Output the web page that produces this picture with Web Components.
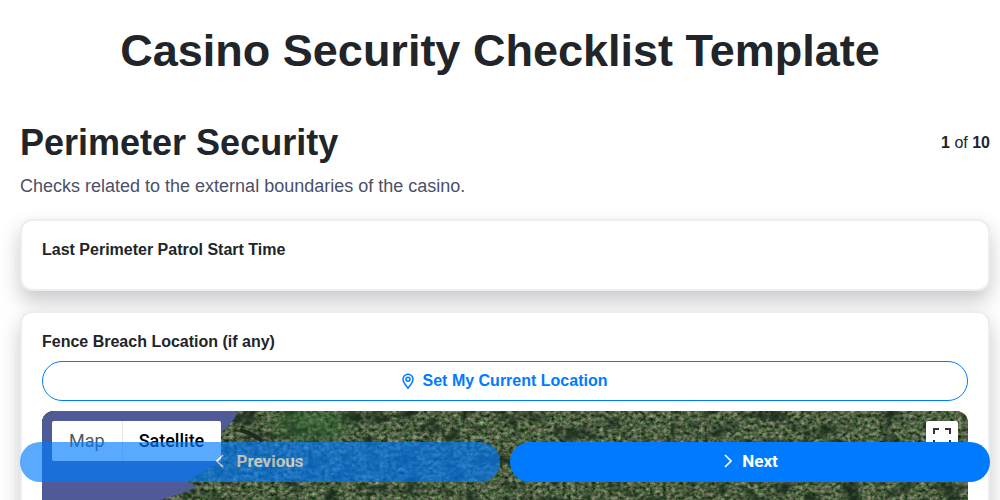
<!DOCTYPE html>
<html lang="en">
<head>
<meta charset="utf-8">
<title>Casino Security Checklist Template</title>
<style>
    html, body { margin: 0; height: 100%; overflow: hidden; background: #fff; }
    body { font-family: "Liberation Sans", Arial, sans-serif; color: #212529; }
</style>
</head>
<body>

<checklist-page>
    <span slot="title">Casino Security Checklist Template</span>
    <section-head heading="Perimeter Security" current="1" total="10">
        Checks related to the external boundaries of the casino.
    </section-head>
    <field-card label="Last Perimeter Patrol Start Time"></field-card>
    <field-card label="Fence Breach Location (if any)">
        <location-button>Set My Current Location</location-button>
        <satellite-map></satellite-map>
    </field-card>
</checklist-page>

<nav-footer></nav-footer>

<script>
class ChecklistPage extends HTMLElement {
    constructor() {
        super();
        this.attachShadow({ mode: 'open' });
    }

    connectedCallback() {
        this.shadowRoot.innerHTML = `
            <style>
                :host { display: block; padding: 0 10px 0 20px; }
                h1 {
                    margin: 0 10px 0 0;
                    padding: 24px 0 44px;
                    font-size: 45px;
                    line-height: 53px;
                    font-weight: 700;
                    text-align: center;
                }
                .body { display: flex; flex-direction: column; gap: 20px; }
            </style>
            <h1><slot name="title"></slot></h1>
            <div class="body"><slot></slot></div>
        `;
    }
}

class SectionHead extends HTMLElement {
    constructor() {
        super();
        this.attachShadow({ mode: 'open' });
    }

    connectedCallback() {
        const heading = this.getAttribute('heading');
        const current = this.getAttribute('current');
        const total = this.getAttribute('total');
        this.shadowRoot.innerHTML = `
            <style>
                :host { display: block; margin-bottom: 2px; }
                .top { display: flex; justify-content: space-between; align-items: center; }
                h2 { margin: 0; font-size: 36px; line-height: 43px; font-weight: 700; }
                .count { font-size: 16px; }
                p { margin: 11px 0 0; font-size: 18px; line-height: 22px; color: #4a5068; }
            </style>
            <div class="top">
                <h2>${heading}</h2>
                <div class="count"><b>${current}</b> of <b>${total}</b></div>
            </div>
            <p><slot></slot></p>
        `;
    }
}

class FieldCard extends HTMLElement {
    constructor() {
        super();
        this.attachShadow({ mode: 'open' });
    }

    connectedCallback() {
        const label = this.getAttribute('label');
        this.shadowRoot.innerHTML = `
            <style>
                :host {
                    display: block;
                    background: #fff;
                    border: 2px solid #ececf3;
                    border-radius: 12px;
                    padding: 20px;
                    box-shadow: 0 10px 20px rgba(33, 37, 41, 0.25);
                }
                .label { font-size: 16px; line-height: 18px; font-weight: 700; margin-bottom: 10px; }
                .content { display: flex; flex-direction: column; gap: 10px; }
            </style>
            <div class="label">${label}</div>
            <div class="content"><slot></slot></div>
        `;
    }
}

class LocationButton extends HTMLElement {
    constructor() {
        super();
        this.attachShadow({ mode: 'open' });
    }

    connectedCallback() {
        this.shadowRoot.innerHTML = `
            <style>
                :host {
                    display: flex;
                    align-items: center;
                    justify-content: center;
                    gap: 7px;
                    height: 38px;
                    padding-right: 3px;
                    border: 1px solid #007bff;
                    border-radius: 20px;
                    color: #007bff;
                    font-size: 16px;
                    font-weight: 700;
                }
                svg { width: 16px; height: 16px; fill: none; stroke: currentColor; stroke-width: 1.5; }
            </style>
            <svg viewBox="0 0 16 16">
                <path d="M8 15.2C5.6 12 3 9.6 3 6.3a5 5 0 0 1 10 0c0 3.3-2.6 5.7-5 8.9z"/>
                <circle cx="8" cy="6.2" r="2"/>
            </svg>
            <slot></slot>
        `;
    }
}

class SatelliteMap extends HTMLElement {
    constructor() {
        super();
        this.attachShadow({ mode: 'open' });
    }

    connectedCallback() {
        this.shadowRoot.innerHTML = `
            <style>
                :host {
                    display: block;
                    position: relative;
                    height: 300px;
                    border-radius: 12px;
                    overflow: hidden;
                    background: #47563a;
                    font-family: Roboto, sans-serif;
                }
                svg.ground { display: block; position: absolute; left: 0; top: 0; }
                .types {
                    position: absolute;
                    left: 10px;
                    top: 10px;
                    display: flex;
                    height: 40px;
                    background: #fff;
                    border-radius: 2px;
                    font-size: 18px;
                    line-height: 40px;
                }
                .types div { padding: 0 17px; }
                .types .map { color: #565656; border-right: 1px solid #e6e6e6; }
                .types .sat { color: #000; font-weight: 500; padding-left: 16px; }
                .full {
                    position: absolute;
                    right: 10px;
                    top: 10px;
                    width: 32px;
                    height: 40px;
                    background: #fff;
                    border-radius: 2px;
                }
                .full svg { display: block; position: absolute; left: 7px; top: 7px; }
            </style>
            <svg class="ground" width="926" height="300">
                <!-- fine speckle of fields -->
                <filter id="land" x="0" y="0" width="100%" height="100%" color-interpolation-filters="sRGB">
                    <feTurbulence type="fractalNoise" baseFrequency="0.24 0.28" numOctaves="3" seed="11"/>
                    <feColorMatrix type="matrix" values="
                        0.8 0 0 0 -0.09
                        0.65 0.25 0 0 -0.07
                        0.7 0 0 0 -0.09
                        0 0 0 0 1"/>
                    <feGaussianBlur stdDeviation="0.4"/>
                </filter>
                <!-- dark woodland patches -->
                <filter id="woods" x="0" y="0" width="100%" height="100%" color-interpolation-filters="sRGB">
                    <feTurbulence type="fractalNoise" baseFrequency="0.05 0.07" numOctaves="3" seed="5"/>
                    <feColorMatrix type="matrix" values="
                        0 0 0 0 0.1
                        0 0 0 0 0.17
                        0 0 0 0 0.11
                        3 0 0 0 -1.45"/>
                </filter>
                <filter id="soft"><feGaussianBlur stdDeviation="8"/></filter>
                <rect width="926" height="300" filter="url(#land)"/>
                <rect width="926" height="300" filter="url(#woods)"/>
                <ellipse cx="270" cy="12" rx="40" ry="16" fill="#2f6a35" opacity="0.45" filter="url(#soft)"/>
                <path d="M198 19Q210 22 220 30" fill="none" stroke="#1d2a1e" stroke-width="4"/>
                <path d="M0 0H195L193 7L180 21L178 30L179 50L170 55L145 70L155 76L140 82L118 89L100 110L0 130z" fill="#4f5a96"/>
            </svg>
            <div class="types"><div class="map">Map</div><div class="sat">Satellite</div></div>
            <div class="full">
                <svg width="18" height="18" viewBox="0 0 18 18" fill="none" stroke="#333" stroke-width="2">
                    <path d="M1 6V1H6M12 1H17V6M17 12V17H12M6 17H1V12"/>
                </svg>
            </div>
        `;
    }
}

class NavFooter extends HTMLElement {
    constructor() {
        super();
        this.attachShadow({ mode: 'open' });
    }

    connectedCallback() {
        this.shadowRoot.innerHTML = `
            <style>
                :host {
                    display: flex;
                    gap: 10px;
                    position: fixed;
                    left: 20px;
                    right: 10px;
                    bottom: 18px;
                }
                button {
                    flex: 1;
                    display: flex;
                    align-items: center;
                    justify-content: center;
                    gap: 10px;
                    height: 40px;
                    padding: 0 0 2px;
                    border: 0;
                    border-radius: 20px;
                    background: #007bff;
                    color: #fff;
                    font: 700 17px Roboto, sans-serif;
                }
                button.off { opacity: 0.65; }
                svg { width: 10px; height: 16px; fill: none; stroke: currentColor; stroke-width: 1.6; }
            </style>
            <button class="off"><svg viewBox="0 0 10 16"><path d="M7 2L1 8l6 6"/></svg>Previous</button>
            <button><svg viewBox="0 0 10 16"><path d="M3 2l6 6-6 6"/></svg>Next</button>
        `;
    }
}

customElements.define('checklist-page', ChecklistPage);
customElements.define('section-head', SectionHead);
customElements.define('field-card', FieldCard);
customElements.define('location-button', LocationButton);
customElements.define('satellite-map', SatelliteMap);
customElements.define('nav-footer', NavFooter);
</script>
</body>
</html>
